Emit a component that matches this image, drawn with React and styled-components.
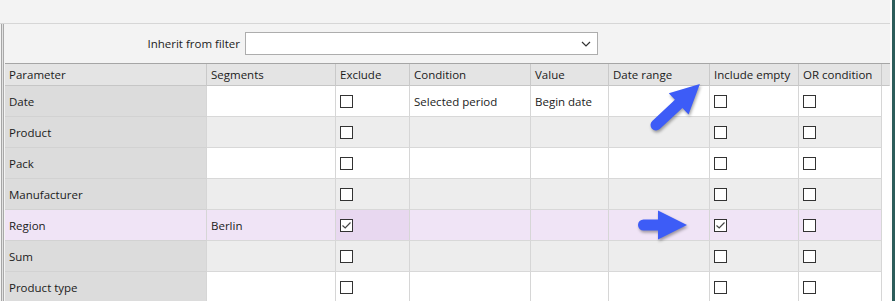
import React from "react";
import styled, { createGlobalStyle } from "styled-components";

const GlobalStyle = createGlobalStyle`
  html, body {
    margin: 0;
    padding: 0;
    background: #f3f3f3;
  }
  body {
    font-family: "Open Sans", "Liberation Sans", sans-serif;
    font-size: 11.5px;
    color: #1b1b1b;
  }
  * {
    box-sizing: border-box;
  }
`;

const Window = styled.div`
  position: relative;
  width: 895px;
  height: 301px;
  overflow: hidden;
  display: flex;
`;

const Content = styled.div`
  flex: 1;
  min-width: 0;
  display: flex;
  flex-direction: column;
`;

const RightEdge = styled.div`
  width: 5px;
  border-left: 2px solid #fafafa;
  background: #2b5c5a;
`;

const TopStrip = styled.div`
  height: 24px;
  flex-shrink: 0;
  background: #f3f3f3;
  border-bottom: 1px solid #d6d6d6;
`;

const Body = styled.div`
  flex: 1;
  display: flex;
  min-height: 0;
`;

/* the double line on the left side of the panel */
const LeftFrame = styled.div`
  width: 5px;
  flex-shrink: 0;
  background: linear-gradient(
    to right,
    #f3f3f3 0 1px,
    #a6a6a6 1px 2px,
    #e2e2e2 2px 3px,
    #a9a9a9 3px 4px,
    #f3f3f3 4px 5px
  );
`;

const Panel = styled.div`
  flex: 1;
  min-width: 0;
  display: flex;
  flex-direction: column;
`;

const FilterBar = styled.div`
  height: 40px;
  flex-shrink: 0;
  display: flex;
  align-items: center;
  gap: 5px;
  background: #f3f3f3;
  border-bottom: 1px solid #a5a5a5;
`;

const FilterLabel = styled.span`
  width: 235px;
  text-align: right;
`;

const Select = styled.div`
  width: 353px;
  height: 23px;
  background: #fff;
  border: 1px solid #adadad;
  display: flex;
  align-items: center;
  justify-content: flex-end;
  padding-right: 6px;
`;

const Grid = styled.div`
  display: grid;
  grid-template-columns: 202px 129px 74px 121px 78px 101px 89px 83px 1fr;
  background: #fff;
`;

const HeaderCell = styled.div`
  height: 22px;
  display: flex;
  align-items: center;
  padding-left: 4px;
  white-space: nowrap;
  background: #e4e4e4;
  border-right: 1px solid ${(p) => (p.$filler ? "transparent" : "#c9c9c9")};
  border-bottom: 1px solid #c6c6c6;
`;

const rowBg = (p) => {
  if (p.$current) return "#e8d8f0";
  if (p.$selected) return "#f0e4f6";
  if (p.$param) return "#dcdcdc";
  return p.$odd ? "#ededed" : "#ffffff";
};

const Cell = styled.div`
  height: 31px;
  display: flex;
  align-items: center;
  padding-left: 4px;
  white-space: nowrap;
  background: ${rowBg};
  border-right: 1px solid #d6d6d6;
  border-bottom: 1px solid ${(p) => (p.$param ? "#d2d2d2" : "#d8d8d8")};
`;

const FillerCell = styled.div`
  height: 31px;
  background: #fff;
`;

const Box = styled.span`
  width: 13px;
  height: 13px;
  background: #fff;
  border: 1px solid #333;
  display: flex;
  align-items: center;
  justify-content: center;
`;

const ArrowLayer = styled.svg`
  position: absolute;
  left: 0;
  top: 0;
  pointer-events: none;
  filter: drop-shadow(1px 2px 1.5px rgba(0, 0, 0, 0.35));
`;

function Chevron() {
  return (
    <svg width="10" height="6" viewBox="0 0 10 6">
      <path d="M1 1 L5 5 L9 1" fill="none" stroke="#333" strokeWidth="1.2" />
    </svg>
  );
}

function Checkbox({ checked }) {
  return (
    <Box>
      {checked && (
        <svg width="11" height="11" viewBox="0 0 11 11">
          <path d="M1.5 5.5 L4.2 8 L9.5 2.5" fill="none" stroke="#444" strokeWidth="1.2" />
        </svg>
      )}
    </Box>
  );
}

// arrow drawn pointing right from the tail at (0,0), then moved and turned
function Arrow({ x, y, length, angle }) {
  const h = 29;
  const b = length - h;
  const d = `M0 -5.5 H${b} V-14.5 L${length} 0 L${b} 14.5 V5.5 H0 A5.5 5.5 0 0 1 0 -5.5 Z`;
  return <path d={d} fill="#3d5cf7" transform={`translate(${x} ${y}) rotate(${angle})`} />;
}

const columns = [
  "Parameter",
  "Segments",
  "Exclude",
  "Condition",
  "Value",
  "Date range",
  "Include empty",
  "OR condition",
];

const rows = [
  { name: "Date", condition: "Selected period", value: "Begin date" },
  { name: "Product" },
  { name: "Pack" },
  { name: "Manufacturer" },
  { name: "Region", segments: "Berlin", exclude: true, includeEmpty: true, selected: true },
  { name: "Sum" },
  { name: "Product type" },
];

export default function App() {
  return (
    <Window>
      <GlobalStyle />
      <Content>
        <TopStrip />
        <Body>
          <LeftFrame />
          <Panel>
            <FilterBar>
              <FilterLabel>Inherit from filter</FilterLabel>
              <Select>
                <Chevron />
              </Select>
            </FilterBar>
            <Grid>
              {columns.map((c) => (
                <HeaderCell key={c}>{c}</HeaderCell>
              ))}
              <HeaderCell $filler />
              {rows.map((r, i) => {
                const common = { $odd: i % 2 === 1, $selected: r.selected };
                return (
                  <React.Fragment key={r.name}>
                    <Cell {...common} $param>{r.name}</Cell>
                    <Cell {...common}>{r.segments}</Cell>
                    <Cell {...common} $current={r.selected}>
                      <Checkbox checked={r.exclude} />
                    </Cell>
                    <Cell {...common}>{r.condition}</Cell>
                    <Cell {...common}>{r.value}</Cell>
                    <Cell {...common} />
                    <Cell {...common}>
                      <Checkbox checked={r.includeEmpty} />
                    </Cell>
                    <Cell {...common}>
                      <Checkbox />
                    </Cell>
                    <FillerCell />
                  </React.Fragment>
                );
              })}
            </Grid>
          </Panel>
        </Body>
      </Content>
      <RightEdge />
      <ArrowLayer width="895" height="301" viewBox="0 0 895 301">
        <Arrow x={656} y={125} length={60} angle={-43} />
        <Arrow x={643.5} y={225} length={43.5} angle={0} />
      </ArrowLayer>
    </Window>
  );
}
